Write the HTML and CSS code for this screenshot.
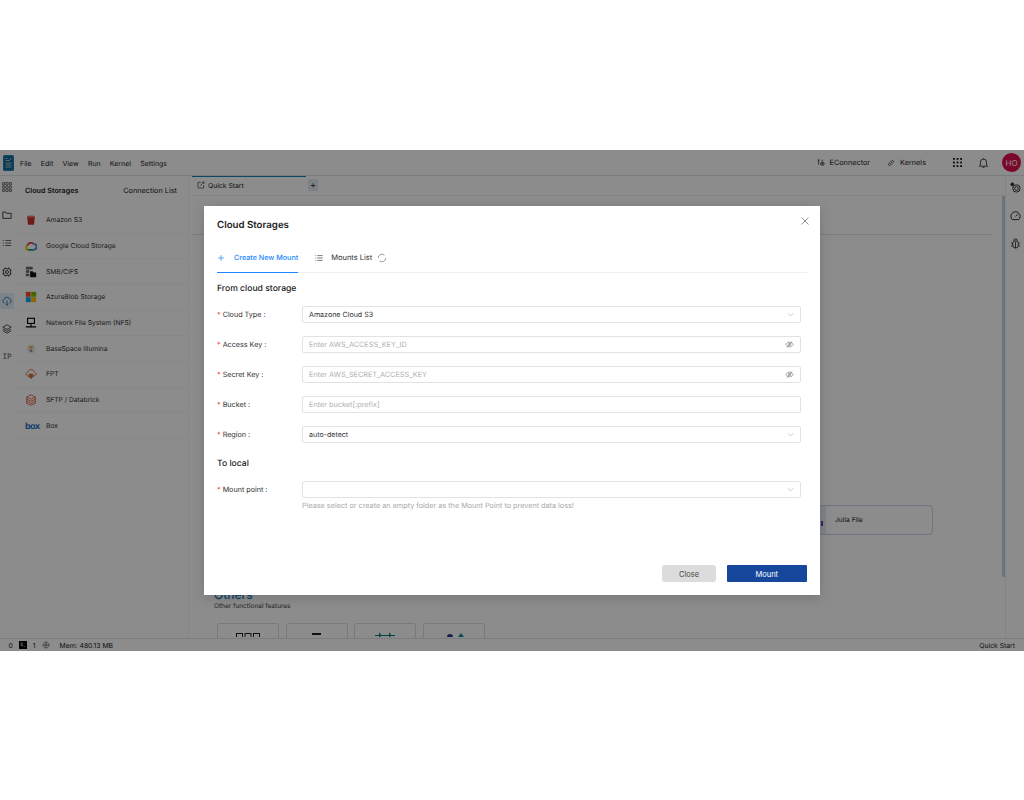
FILE: index.html
```html
<!DOCTYPE html>
<html lang="en">
<head>
<meta charset="utf-8">
<title>Cloud Storages</title>
<link rel="stylesheet" href="styles.css">
</head>
<body>
<div class="app">
  <header class="topbar">
    <div class="menu">
      <svg class="logo" viewBox="0 0 11 16"><rect width="11" height="16" rx="1.500" fill="#1a80b6"/><rect x="1.500" y="1.500" width="8" height="13" fill="#0f5f8c"/><path d="M2.500 3.500h2M2.500 5.500h4l1.500-2.500M2.500 8h6M2.500 10h6M2.500 12h6" stroke="#cfe6f2" stroke-width=".8" fill="none"/></svg>
      <span>File</span><span>Edit</span><span>View</span><span>Run</span><span>Kernel</span><span>Settings</span>
    </div>
    <div class="top-right">
      <span class="top-link"><svg class="ic9" viewBox="0 0 12 12" fill="none" stroke="#222" stroke-width="1.100"><path d="M1 1.500h3M2.500 1.500v7"/><circle cx="8" cy="7" r="2.600"/><circle cx="8" cy="7" r=".8" fill="#222"/><path d="M8 1v2"/></svg>EConnector</span>
      <span class="top-link"><svg class="ic9" viewBox="0 0 12 12" fill="none" stroke="#222" stroke-width="1.100"><path d="M5 7 7 5M4.500 5 2.500 7a1.800 1.800 0 0 0 2.500 2.500l2-2M7.500 7l2-2A1.800 1.800 0 0 0 7 2.500l-2 2"/></svg>Kernels</span>
      <svg class="grid-ic" viewBox="0 0 10 10" fill="#111"><rect x="0" y="0" width="2" height="2"/><rect x="4" y="0" width="2" height="2"/><rect x="8" y="0" width="2" height="2"/><rect x="0" y="4" width="2" height="2"/><rect x="4" y="4" width="2" height="2"/><rect x="8" y="4" width="2" height="2"/><rect x="0" y="8" width="2" height="2"/><rect x="4" y="8" width="2" height="2"/><rect x="8" y="8" width="2" height="2"/></svg>
      <svg class="bell" viewBox="0 0 12 12" fill="none" stroke="#222" stroke-width=".9"><path d="M1.500 9.500h9L9.300 8V5a3.300 3.300 0 0 0-6.600 0v3zM5 11h2M6 .8v1"/></svg>
      <span class="avatar">HO</span>
    </div>
  </header>
  <div class="body">
    <nav class="rail">
      <svg class="rail-ic" viewBox="0 0 10 10" fill="none" stroke="#333" stroke-width=".7"><rect x=".5" y=".5" width="2.300" height="2.300" rx=".5"/><rect x="3.850" y=".5" width="2.300" height="2.300" rx=".5"/><rect x="7.200" y=".5" width="2.300" height="2.300" rx=".5"/><rect x=".5" y="3.850" width="2.300" height="2.300" rx=".5"/><rect x="3.850" y="3.850" width="2.300" height="2.300" rx=".5"/><rect x="7.200" y="3.850" width="2.300" height="2.300" rx=".5"/><rect x=".5" y="7.200" width="2.300" height="2.300" rx=".5"/><rect x="3.850" y="7.200" width="2.300" height="2.300" rx=".5"/><rect x="7.200" y="7.200" width="2.300" height="2.300" rx=".5"/></svg>
      <svg class="rail-ic" viewBox="0 0 12 12" fill="none" stroke="#222" stroke-width="1"><path d="M1 2.500h3.500l1 1.500H11v6H1z"/></svg>
      <svg class="rail-ic" viewBox="0 0 12 12" fill="none" stroke="#333" stroke-width=".9"><path d="M4 3h7M4 6h7M4 9h7M1 3h1.200M1 6h1.200M1 9h1.200"/></svg>
      <svg class="rail-ic" viewBox="0 0 12 12" fill="none" stroke="#222" stroke-width="1"><rect x="2" y="2" width="8" height="8" rx="1.500"/><circle cx="6" cy="6" r="1.800"/><path d="M4 .5V2M8 .5V2M4 10v1.500M8 10v1.500M.5 4H2M.5 8H2M10 4h1.500M10 8h1.500"/></svg>
      <span class="rail-active"><svg class="rail-ic" viewBox="0 0 12 12" fill="none" stroke="#1c6a9c" stroke-width="1"><path d="M3 8.500a2.300 2.300 0 0 1-.3-4.500 3.400 3.400 0 0 1 6.600 0A2.300 2.300 0 0 1 9 8.500M6 5.500V11M4.500 9.500 6 11l1.500-1.500"/></svg></span>
      <svg class="rail-ic" viewBox="0 0 12 12" fill="none" stroke="#222" stroke-width=".9"><path d="M6 1 11 3.800 6 6.500 1 3.800zM1 6l5 2.700L11 6M1 8.200 6 11l5-2.800"/></svg>
      <span class="rail-ip">IP</span>
    </nav>
    <aside class="panel">
      <div class="panel-head"><strong>Cloud Storages</strong><span>Connection List</span></div>
      <ul class="storage-list">
        <li><svg class="st-ic" viewBox="0 0 14 14"><path d="M2.500 3h9l-1 9.500h-7z" fill="#c9302c"/><ellipse cx="7" cy="3" rx="4.500" ry="1.200" fill="#e8746f"/></svg>Amazon S3</li>
        <li><svg class="st-ic" viewBox="0 0 14 14" fill="none" stroke-width="2"><path d="M3.500 11.500A2.700 2.700 0 0 1 3 6.300" stroke="#f4b400"/><path d="M3 6.300A4.200 4.200 0 0 1 10 4.500" stroke="#db4437"/><path d="M10 4.500A3.500 3.500 0 0 1 10 11.500" stroke="#4285f4"/><path d="M3.500 11.500H10" stroke="#0f9d58"/></svg>Google Cloud Storage</li>
        <li><svg class="st-ic" viewBox="0 0 14 14"><path d="M1 1h8v3H1zM1 5h4v3H1zM1 9h4v3H1z" fill="#666"/><path d="M6 6h3l1 1.500h3V13H6z" fill="#111"/></svg>SMB/CIFS</li>
        <li><svg class="st-ic" viewBox="0 0 14 14"><rect x="1" y="1" width="5.700" height="5.700" fill="#f25022"/><rect x="7.300" y="1" width="5.700" height="5.700" fill="#7fba00"/><rect x="1" y="7.300" width="5.700" height="5.700" fill="#00a4ef"/><rect x="7.300" y="7.300" width="5.700" height="5.700" fill="#ffb900"/></svg>AzureBlob Storage</li>
        <li><svg class="st-ic" viewBox="0 0 14 14" fill="none" stroke="#000" stroke-width="1.300"><rect x="3" y="1.500" width="8" height="6"/><path d="M7 7.500V11M1 11.500h12"/></svg>Network File System (NFS)</li>
        <li><svg class="st-ic" viewBox="0 0 14 14"><circle cx="7" cy="7" r="5.500" fill="#ececec"/><path d="M4.500 3.500h5l-.7 3h-3.600z" fill="#e2b13c"/><rect x="5.500" y="7.500" width="3" height="3" fill="#999"/></svg>BaseSpace Illumina</li>
        <li><svg class="st-ic" viewBox="0 0 14 14" fill="none" stroke="#d0703c" stroke-width="1"><path d="M.5 7 3.500 4.500a3.600 3.600 0 0 1 7 0L13.500 7l-3 2.500h-7z"/><path d="M4.800 7h4.400v3L7 12.500 4.800 10z" fill="#d0703c"/></svg>FPT</li>
        <li><svg class="st-ic" viewBox="0 0 14 14" fill="none" stroke="#e0583f" stroke-width="1"><path d="M7 1l5 2.500v7.500L7 13l-5-2V3.500zM2 6l5 2.500L12 6M2 8.500 7 11l5-2.500M2 3.500 7 6l5-2.500"/></svg>SFTP / Databrick</li>
        <li><span class="box-logo">box</span>Box</li>
      </ul>
    </aside>
    <main class="main">
      <div class="tabbar">
        <span class="tab"><svg class="ic9" viewBox="0 0 12 12" fill="none" stroke="#333" stroke-width="1"><path d="M6 2H1.500v8.500H10V6M5 7l5.500-5.500M7.500 1.500h3v3"/></svg>Quick Start</span>
        <span class="tab-add">+</span>
      </div>
      <div class="content">
        <div class="launcher">
          <div class="rule"></div>
          <div class="julia-row"><div class="card julia"><span class="julia-tag"><span class="julia-dot"></span></span><span class="julia-name">Julia File</span></div></div>
          <div class="others">
            <h2>Others</h2>
            <p>Other functional features</p>
            <div class="other-cards"><div class="mini"><svg class="mini-ic" viewBox="0 0 24 4" fill="none" stroke="#222" stroke-width="1"><rect x=".5" y=".5" width="6" height="5"/><rect x="9" y=".5" width="6" height="5"/><rect x="17.500" y=".5" width="6" height="5"/></svg></div><div class="mini"><svg class="mini-ic" viewBox="0 0 24 4" fill="#222"><rect x="7" width="9" height="2"/></svg></div><div class="mini"><svg class="mini-ic" viewBox="0 0 24 4" fill="#0d7a78"><rect x="2" y="2" width="20" height="1"/><rect x="6" width="1.500" height="4"/><rect x="16" width="1.500" height="4"/></svg></div><div class="mini"><svg class="mini-ic" viewBox="0 0 24 4"><circle cx="8" cy="4" r="3" fill="#2a3490"/><path d="M16 4l3-4 3 4z" fill="#0d8f9a"/></svg></div></div>
          </div>
        </div>
        <div class="scrollbar"></div>
      </div>
    </main>
    <aside class="tools">
      <svg class="tool-ic" viewBox="0 0 12 12" fill="none" stroke="#222" stroke-width="1"><circle cx="2.500" cy="2.500" r="1.500" fill="#222"/><circle cx="7" cy="7" r="4"/><circle cx="7" cy="7" r="2"/></svg>
      <svg class="tool-ic" viewBox="0 0 12 12" fill="none" stroke="#222" stroke-width="1"><path d="M2.500 10.500a5 5 0 1 1 7 0zM6 7l2.500-2.500"/></svg>
      <svg class="tool-ic" viewBox="0 0 12 12" fill="none" stroke="#222" stroke-width=".9"><rect x="3" y="3" width="6" height="8" rx="3"/><path d="M4 3a2 2 0 0 1 4 0M6 4v7M1 5l2 1M11 5 9 6M1 9l2-1M11 9 9 8"/></svg>
    </aside>
  </div>
  <footer class="statusbar">
    <div class="status-left"><span>0</span><span class="term">$_</span><span>1</span><svg class="ic9" viewBox="0 0 12 12" fill="none" stroke="#333" stroke-width="1"><circle cx="6" cy="6" r="4.500" stroke-dasharray="1.500 .7"/><path d="M1.500 6h9M6 1.500v9"/></svg><span class="mem">Mem: 480.13 MB</span></div>
    <span>Quick Start</span>
  </footer>

  <div class="overlay">
    <section class="modal">
      <svg class="modal-close" viewBox="0 0 10 10" fill="none" stroke="#777" stroke-width=".8"><path d="M1.500 1.500l7 7M8.500 1.500l-7 7"/></svg>
      <h1>Cloud Storages</h1>
      <div class="tabs">
        <span class="mtab active"><svg class="ic9" viewBox="0 0 10 10" fill="none" stroke="#1b87ff" stroke-width=".9"><path d="M5 1.500v7M1.500 5h7"/></svg><b>Create New Mount</b></span>
        <span class="mtab"><svg class="ic9" viewBox="0 0 10 10" fill="none" stroke="#444" stroke-width=".9"><path d="M3 2h6.500M3 5h6.500M3 8h6.500M.5 2h1M.5 5h1M.5 8h1"/></svg>Mounts List<svg class="ic10 spin" viewBox="0 0 12 12" fill="none" stroke="#777" stroke-width=".9"><path d="M1.500 6a4.500 4.500 0 0 1 7.500-3.400M10.500 6A4.500 4.500 0 0 1 3 9.400"/></svg></span>
      </div>
      <h3 class="group">From cloud storage</h3>
      <div class="row"><label><i>*</i> Cloud Type :</label><div class="field"><span class="val">Amazone Cloud S3</span><svg class="chev" viewBox="0 0 10 6" fill="none" stroke="#aaa" stroke-width=".9"><path d="M1 1l4 4 4-4"/></svg></div></div>
      <div class="row"><label><i>*</i> Access Key :</label><div class="field"><span class="ph">Enter AWS_ACCESS_KEY_ID</span><svg class="eye" viewBox="0 0 12 12" fill="none" stroke="#777" stroke-width=".9"><path d="M1 6s2-3.200 5-3.200S11 6 11 6 9 9.200 6 9.200 1 6 1 6z"/><circle cx="6" cy="6" r="1.500"/><path d="M2.500 10 9.500 2"/></svg></div></div>
      <div class="row"><label><i>*</i> Secret Key :</label><div class="field"><span class="ph">Enter AWS_SECRET_ACCESS_KEY</span><svg class="eye" viewBox="0 0 12 12" fill="none" stroke="#777" stroke-width=".9"><path d="M1 6s2-3.200 5-3.200S11 6 11 6 9 9.200 6 9.200 1 6 1 6z"/><circle cx="6" cy="6" r="1.500"/><path d="M2.500 10 9.500 2"/></svg></div></div>
      <div class="row"><label><i>*</i> Bucket :</label><div class="field"><span class="ph">Enter bucket[:prefix]</span></div></div>
      <div class="row"><label><i>*</i> Region :</label><div class="field"><span class="val">auto-detect</span><svg class="chev" viewBox="0 0 10 6" fill="none" stroke="#aaa" stroke-width=".9"><path d="M1 1l4 4 4-4"/></svg></div></div>
      <h3 class="group local">To local</h3>
      <div class="row tight"><label><i>*</i> Mount point :</label><div class="field"><span class="val"></span><svg class="chev" viewBox="0 0 10 6" fill="none" stroke="#aaa" stroke-width=".9"><path d="M1 1l4 4 4-4"/></svg></div></div>
      <p class="help">Please select or create an empty folder as the Mount Point to prevent data loss!</p>
      <div class="actions"><button class="btn-close">Close</button><button class="btn-mount">Mount</button></div>
    </section>
  </div>
</div>
</body>
</html>
```
FILE: styles.css
```css
* { box-sizing: border-box; }
html, body { margin: 0; padding: 0; background: #fff; }
body { padding-top: 150px; height: 800px; overflow: hidden; font-family: Inter, "Liberation Sans", sans-serif; color: #222; font-size: 7.2px; text-rendering: geometricPrecision; }
.app { position: relative; width: 1024px; height: 501px; display: flex; flex-direction: column; background: #fff; overflow: hidden; }
.topbar { height: 26px; flex: none; display: flex; justify-content: space-between; align-items: center; border-bottom: 1px solid #dbe3ea; padding-right: 3px; }
.menu { display: flex; align-items: center; column-gap: 9.200px; padding-top: 1px; }
.menu span { font-size: 7px; }
.logo { width: 11px; height: 16px; margin: -1px -2.700px 0 2.500px; }
.top-right { display: flex; align-items: center; }
.top-link { display: flex; align-items: center; gap: 5px; font-size: 7.300px; margin-right: 17px; }
.ic9 { width: 8px; height: 8px; flex: none; }
.ic10 { width: 10px; height: 10px; flex: none; }
.grid-ic { width: 9px; height: 9px; margin: 0 16px 0 10px; }
.bell { width: 11px; height: 12px; margin-right: 13px; }
.avatar { width: 19px; height: 19px; border-radius: 50%; background: #e0104f; color: #fff; display: flex; align-items: center; justify-content: center; font-size: 8px; }
.body { flex: 1; display: flex; min-height: 0; }
.rail { width: 17px; flex: none; display: flex; flex-direction: column; align-items: center; padding: 6px 3px 0 0; gap: 18.200px; }
.rail-ic { width: 10px; height: 10px; display: block; flex: none; }
.rail-active { width: 14px; height: 16px; margin: -2px 0 -3px; background: #e2eefb; border-radius: 2px; display: flex; align-items: center; justify-content: center; flex: none; }
.rail-ip { font-family: "DejaVu Sans Mono", monospace; font-size: 7.500px; color: #555; line-height: 10px; }
.panel { width: 172px; flex: none; border-right: 1px solid #f1f3f6; }
.panel-head { height: 32px; display: flex; justify-content: space-between; align-items: center; padding: 0 11px 4px 8px; }
.panel-head strong { font-weight: 600; font-size: 7.200px; }
.panel-head span { font-size: 7.300px; }
.storage-list { list-style: none; margin: 0; padding: 0; }
.storage-list li { height: 25.670px; display: flex; align-items: center; gap: 9px; padding-left: 8px; border-bottom: 1px solid #f5f6f8; font-size: 6.700px; color: #333; margin-right: 1px; }
.st-ic { width: 12px; height: 12px; flex: none; }
.box-logo { width: 14px; margin-right: -2px; font: 700 9px "Liberation Sans", sans-serif; color: #1266c4; letter-spacing: -.5px; flex: none; }
.main { flex: 1; min-width: 0; display: flex; flex-direction: column; padding-left: 3px; }
.tabbar { height: 20px; flex: none; display: flex; align-items: stretch; border-bottom: 1px solid #eef1f4; }
.tab { width: 114px; display: flex; align-items: center; gap: 3px; padding: 0 0 2px 5px; border-top: 1px solid #1a80c0; background: #fff; font-size: 6.800px; }
.tab-add { width: 10px; height: 12px; margin: 3px 0 0 2px; background: #e5ebf1; display: flex; align-items: center; justify-content: center; font-size: 9px; line-height: 1; }
.content { flex: 1; min-height: 0; display: flex; overflow: hidden; }
.launcher { flex: 1; min-width: 0; padding-right: 3px; display: flex; flex-direction: column; }
.rule { height: 1px; flex: none; margin-top: 38px; background: #dfe6ec; width: 801px; }
.julia-row { height: 284px; flex: none; padding-top: 270px; display: flex; justify-content: flex-end; padding-right: 66px; }
.card.julia { width: 185px; height: 30px; display: flex; align-items: center; border: 1px solid #c9d6ea; border-radius: 4px; flex: none; overflow: hidden; }
.julia-tag { width: 77px; height: 100%; background: #e8eff5; display: flex; justify-content: flex-end; align-items: center; flex: none; }
.julia-dot { width: 1.500px; height: 5px; margin: 7px 3.500px 0 0; background: #7a2fb0; }
.julia-name { font-size: 6.700px; margin-left: 9px; }
.others { padding-left: 22px; margin-top: 69px; flex: none; }
.others h2 { margin: 0; font-size: 12px; font-weight: 500; color: #0a7bb8; line-height: 14px; }
.others p { margin: 0; font-size: 6.500px; color: #444; line-height: 9px; }
.other-cards { display: flex; gap: 6.500px; margin-left: 3px; margin-top: 12px; }
.mini { width: 62px; height: 20px; border: 1px solid #d8e0ea; border-bottom: 0; border-radius: 3px 3px 0 0; display: flex; justify-content: center; padding-top: 9px; flex: none; }
.mini-ic { width: 24px; height: 4px; }
.scrollbar { width: 3px; height: 381px; background: #c5d2de; flex: none; }
.tools { width: 19px; flex: none; display: flex; flex-direction: column; align-items: center; padding-top: 6px; gap: 17px; border-left: 1px solid #eef1f4; }
.tool-ic { width: 11px; height: 11px; }
.statusbar { height: 13px; flex: none; display: flex; justify-content: space-between; align-items: center; border-top: 1px solid #dbe3ea; padding: 0 9px 0 8.500px; font-size: 6.800px; }
.status-left { display: flex; align-items: center; gap: 6px; }
.status-left .term { width: 8px; height: 8px; background: #000; color: #fff; font-size: 4.500px; display: flex; align-items: center; justify-content: center; }
.status-left .mem { margin-left: 4px; }
.overlay { position: absolute; inset: 0; background: rgba(0,0,0,.45); display: flex; align-items: center; justify-content: center; }
.modal { position: relative; width: 616px; height: 389px; background: #fff; padding: 12.500px 13px 0; box-shadow: 0 3px 12px rgba(0,0,0,.15); }
.modal-close { position: absolute; top: 10px; right: 10px; width: 10px; height: 10px; }
.modal h1 { margin: 0; font-size: 9.700px; font-weight: 600; line-height: 13px; color: #222; }
.tabs { margin-top: 12.500px; display: flex; gap: 17px; height: 29px; border-bottom: 1px solid #f0f0f0; font-size: 7.500px; align-items: stretch; }
.mtab { display: flex; align-items: center; gap: 4px; padding-bottom: 1px; color: #333; }
.mtab.active { color: #1b87ff; border-bottom: 1px solid #1b87ff; margin-bottom: -1px; }
.mtab b { font-weight: 500; font-size: 7.200px; }
.mtab .ic9 { margin-right: 4px; }
.mtab.active .ic9 { margin-right: 5px; }
.mtab .spin { margin-left: 1px; }
.group { margin: 0; font-size: 8.600px; font-weight: 500; line-height: 12px; color: #222; padding-top: 10px; height: 33px; }
.group.local { height: 25px; padding-top: 2px; }
.row { display: flex; height: 30px; align-items: flex-start; padding-right: 6px; }
.row.tight { height: 19px; }
.row label { width: 85px; flex: none; font-size: 7.200px; color: #333; line-height: 17px; }
.row label i { color: #e5484d; font-style: normal; }
.field { flex: 1; height: 17px; border: 1px solid #e2e2e2; border-radius: 2px; display: flex; align-items: center; justify-content: space-between; padding: 0 6px; }
.val { color: #333; font-size: 7.100px; }
.ph { color: #b0b0b0; font-size: 7.300px; }
.chev { width: 7px; height: 5px; }
.eye { width: 9px; height: 9px; }
.help { margin: 0 0 0 85px; font-size: 7.250px; color: #a8a8a8; line-height: 12px; }
.actions { position: absolute; right: 13.500px; bottom: 13px; display: flex; gap: 11px; align-items: center; }
.actions button { font-family: inherit; font-size: 7.500px; height: 17px; border: 0; padding: 1px 0 0; }
.btn-close { width: 54px; background: #dcdcdc; color: #444; border-radius: 3px; }
.btn-mount { width: 79.500px; background: #16479c; color: #fff; border-radius: 1px; }
```
